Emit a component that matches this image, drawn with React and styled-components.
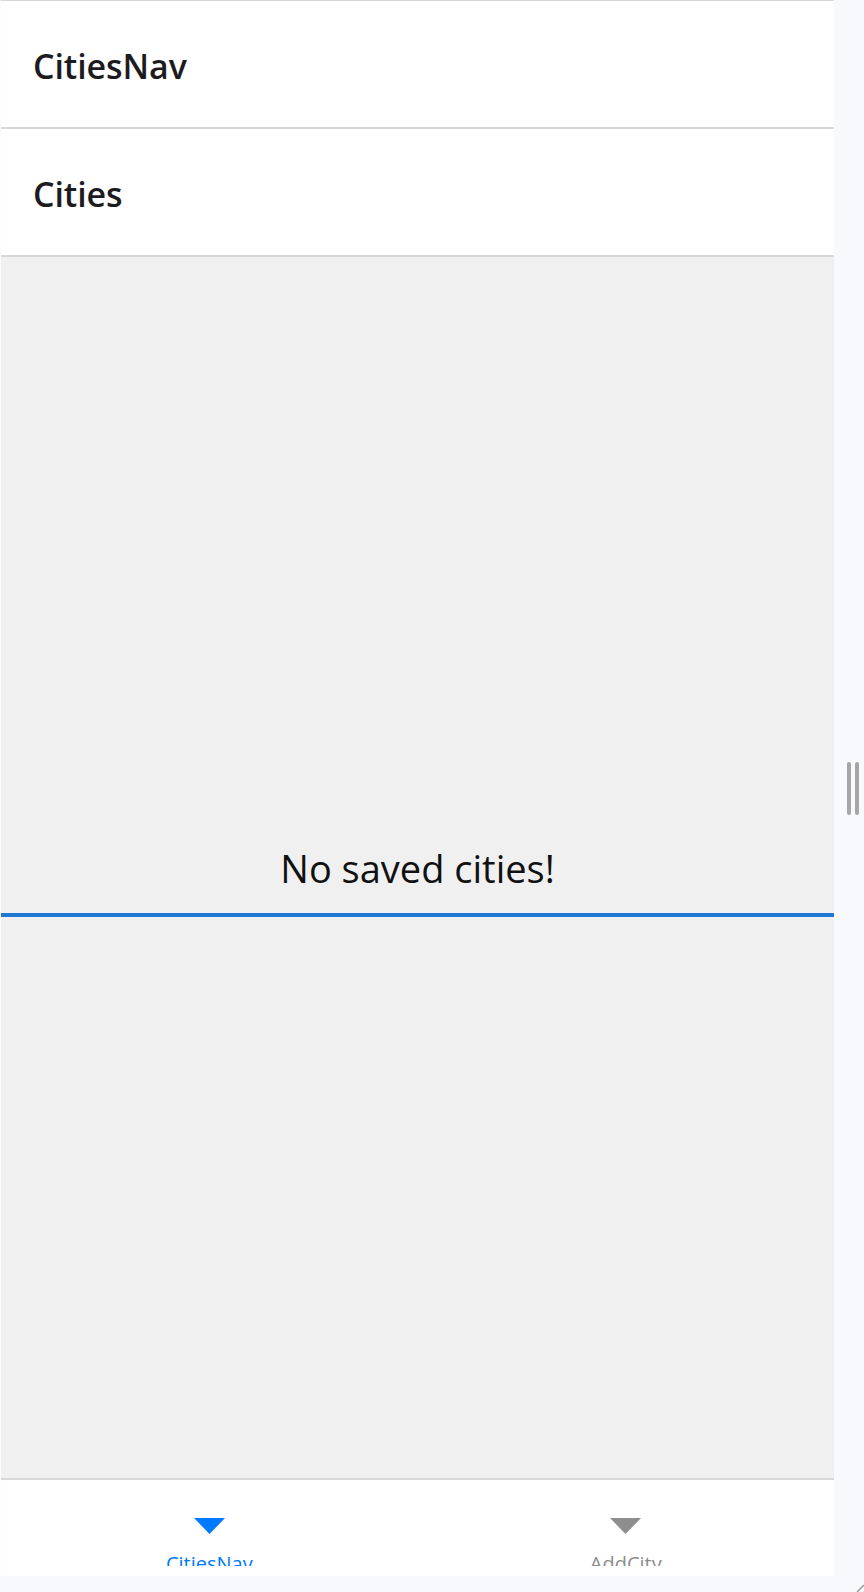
import React from "react";
import styled, { createGlobalStyle } from "styled-components";

const GlobalStyle = createGlobalStyle`
  html, body {
    margin: 0;
    padding: 0;
    background: #f8f9fc;
    font-family: "Open Sans", "Noto Sans", sans-serif;
    overflow: hidden;
  }
`;

const Frame = styled.div`
  width: 864px;
  height: 1592px;
  display: grid;
  grid-template-columns: 834px 30px;
  grid-template-rows: 1576px 16px;
  background: #f8f9fc;
`;

const AppWindow = styled.div`
  display: flex;
  flex-direction: column;
  overflow: hidden;
  background: #f0f0f0;
  border-top: 1px solid #d8d8d8;
  border-left: 1px solid #fbfbfb;
`;

const Header = styled.header`
  flex: 0 0 128px;
  box-sizing: border-box;
  display: flex;
  align-items: center;
  padding: 4px 0 0 32px;
  background: #ffffff;
  border-bottom: 2px solid #d8d8d8;
`;

const Title = styled.h1`
  margin: 0;
  font-size: 34px;
  font-weight: 600;
  color: #1c1c1e;
  letter-spacing: -0.1px;
`;

const Content = styled.main`
  flex: 1;
  min-height: 0;
  display: flex;
  flex-direction: column;
  justify-content: center;
  background: #f0f0f0;
`;

const EmptyMessage = styled.div`
  margin-top: 26px;
  padding-bottom: 22px;
  border-bottom: 4px solid #1e78d6;
  text-align: center;
  font-size: 38px;
  line-height: 46px;
  color: #111111;
`;

const TabBar = styled.nav`
  flex: 0 0 96px;
  display: flex;
  align-items: flex-start;
  overflow: hidden;
  background: #ffffff;
  border-top: 2px solid #d8d8d8;
`;

const Tab = styled.div`
  flex: 1;
  height: 86px;
  box-sizing: border-box;
  overflow: hidden;
  display: flex;
  flex-direction: column;
  align-items: center;
  padding-top: 38px;
  color: ${(p) => (p.$active ? "#007aff" : "#8e8e8e")};

  svg {
    flex-shrink: 0;
  }
`;

const TabLabel = styled.span`
  flex-shrink: 0;
  margin-top: 18px;
  font-size: 20px;
  line-height: 24px;
  white-space: nowrap;
`;

const SideRail = styled.div`
  display: flex;
  align-items: center;
  justify-content: center;
  padding-left: 7px;
  gap: 4px;
`;

const Grip = styled.span`
  width: 4px;
  height: 53px;
  border-radius: 2px;
  background: #a6a6a6;
`;

const BottomStrip = styled.div`
  grid-column: 1 / 3;
  display: flex;
  justify-content: flex-end;
  align-items: flex-end;
`;

const TriangleIcon = () => (
  <svg width="31" height="16" viewBox="0 0 31 16">
    <path d="M0 0 H31 L15.5 16 Z" fill="currentColor" />
  </svg>
);

export default function App() {
  return (
    <>
      <GlobalStyle />
      <Frame>
        <AppWindow>
          <Header>
            <Title>CitiesNav</Title>
          </Header>
          <Header>
            <Title>Cities</Title>
          </Header>
          <Content>
            <EmptyMessage>No saved cities!</EmptyMessage>
          </Content>
          <TabBar>
            <Tab $active>
              <TriangleIcon />
              <TabLabel>CitiesNav</TabLabel>
            </Tab>
            <Tab>
              <TriangleIcon />
              <TabLabel>AddCity</TabLabel>
            </Tab>
          </TabBar>
        </AppWindow>
        <SideRail>
          <Grip />
          <Grip />
        </SideRail>
        <BottomStrip>
          <svg width="8" height="8" viewBox="0 0 8 8">
            <path d="M8 1 L1 8" stroke="#9a9a9a" strokeWidth="1.5" />
          </svg>
        </BottomStrip>
      </Frame>
    </>
  );
}
